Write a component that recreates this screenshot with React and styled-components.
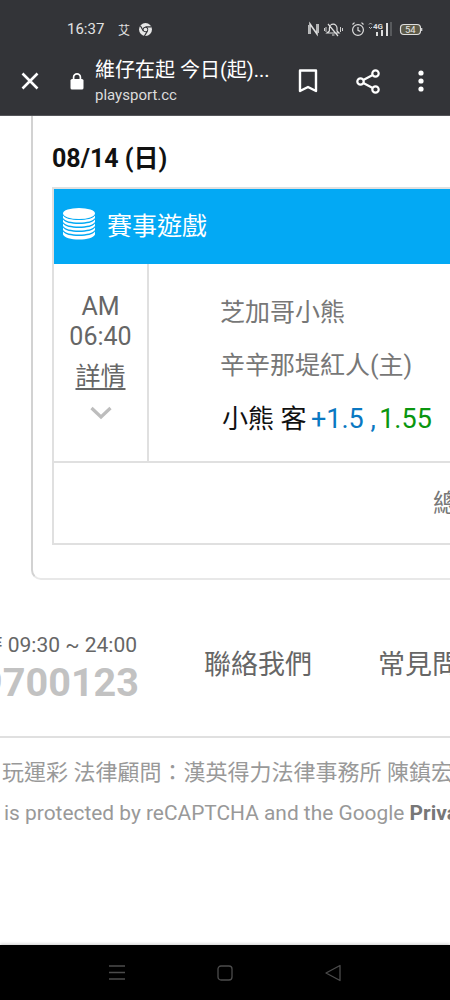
import React from "react";
import styled, { createGlobalStyle } from "styled-components";

const GlobalStyle = createGlobalStyle`
  html, body {
    margin: 0;
    padding: 0;
    background: #fff;
  }

  body {
    font-family: Roboto, "Noto Sans CJK TC", "Noto Sans", sans-serif;
  }
`;

const Phone = styled.div`
  width: 450px;
  height: 1000px;
  display: flex;
  flex-direction: column;
  overflow: hidden;
  background: #fff;
`;

const BrowserBar = styled.header`
  flex: 0 0 116px;
  box-sizing: border-box;
  background: #333438;
  border-bottom: 1px solid #55565a;
  color: #fff;
`;

const StatusBar = styled.div`
  height: 58px;
  display: flex;
  align-items: center;
  padding-left: 67px;
  color: #e2e2e2;
`;

const Clock = styled.span`
  font-size: 15px;
  width: 51px;
`;

const StatusChar = styled.span`
  font-size: 12px;
  width: 21px;
`;

const StatusRight = styled.div`
  margin-left: auto;
  width: 142px;
  display: flex;
  align-items: center;
`;

const Toolbar = styled.div`
  height: 46px;
  display: flex;
  align-items: center;
`;

const IconSlot = styled.div`
  flex: 0 0 ${({ $width }) => $width}px;
  display: flex;
  justify-content: center;
  align-items: center;
`;

const PageTitle = styled.div`
  flex: 0 0 192px;
  margin-left: 1px;
  white-space: nowrap;
  overflow: hidden;
`;

const TitleMain = styled.div`
  padding-top: 1px;
  font-size: 20px;
  line-height: 26px;
`;

const TitleUrl = styled.div`
  padding-top: 1px;
  font-size: 15px;
  line-height: 22px;
  color: #dcdcdc;
`;

const Main = styled.main`
  flex: 0 0 464px;
  padding-left: 31px;
`;

const Card = styled.section`
  box-sizing: border-box;
  width: 640px;
  height: 464px;
  padding: 28px 0 0 19px;
  border-left: 2px solid #d2d2d2;
  border-bottom: 2px solid #e8e8e8;
  border-bottom-left-radius: 10px;
`;

const DateTitle = styled.h2`
  margin: 0 0 13px;
  font-size: 25px;
  line-height: 30px;
  font-weight: 700;
  color: #111;
`;

const Table = styled.div`
  width: 620px;
  border: 2px solid #e0e0e0;
`;

const TableHeader = styled.div`
  height: 75px;
  box-sizing: border-box;
  padding: 0 0 6px 9px;
  display: flex;
  align-items: center;
  gap: 12px;
  background: #03a9f4;
  color: #fff;
  font-size: 25px;
`;

const MatchRow = styled.div`
  height: 197px;
  display: flex;
  border-bottom: 2px solid #e0e0e0;
`;

const TimeCell = styled.div`
  flex: 0 0 93px;
  border-right: 2px solid #e0e0e0;
  display: flex;
  flex-direction: column;
  align-items: center;
  padding-top: 28px;
  color: #666;
  font-size: 25px;
  line-height: 30px;
`;

const DetailLink = styled.a`
  margin-top: 10px;
  text-decoration: underline;
  text-underline-offset: 3px;
  line-height: 30px;
  color: #666;
`;

const Chevron = styled.div`
  margin-top: 14px;
  display: flex;
`;

const TeamCell = styled.div`
  padding: 27px 0 0 71px;
`;

const TeamName = styled.div`
  height: 53px;
  font-size: 25px;
  line-height: 44px;
  color: #777;
`;

const BetLine = styled.div`
  height: 44px;
  margin-left: 2px;
  font-size: 26px;
  line-height: 44px;
  color: #111;
  white-space: nowrap;
`;

const BetValue = styled.span`
  margin-left: ${({ $pull }) => $pull}px;
  font-size: 27px;
  color: ${({ $color }) => $color};
`;

const TotalRow = styled.div`
  height: 80px;
  display: flex;
  align-items: center;
  padding: 0 0 4px 379px;
  box-sizing: border-box;
  font-size: 25px;
  color: #777;
`;

const Footer = styled.footer`
  flex: 1;
  min-height: 0;
`;

const FooterTop = styled.div`
  height: 158px;
  box-sizing: border-box;
  padding-top: 53px;
  display: flex;
  border-bottom: 2px solid #e0e0e0;
`;

const Contact = styled.div`
  flex: 0 0 139px;
  min-width: 0;
  display: flex;
  flex-direction: column;
  align-items: flex-end;
  white-space: nowrap;
`;

const Hours = styled.div`
  margin-right: 2px;
  font-size: 21px;
  line-height: 24px;
  color: #666;
`;

const Hotline = styled.div`
  font-size: 39.6px;
  line-height: 52px;
  font-weight: 700;
  color: #c2c2c2;
`;

const FooterLinks = styled.nav`
  display: flex;
  gap: 66px;
  margin-left: 65px;
  padding-top: 14px;
  white-space: nowrap;
`;

const FooterLink = styled.a`
  font-size: 27px;
  line-height: 36px;
  color: #666;
`;

const Legal = styled.div`
  margin-left: ${({ $offset }) => $offset}px;
  height: 40px;
  font-size: ${({ $size }) => $size}px;
  line-height: 40px;
  color: #999;
  white-space: nowrap;
`;

const LegalStrong = styled.strong`
  color: #777;
`;

const LegalBlock = styled.div`
  padding-top: 15px;
`;

const NavBar = styled.div`
  flex: 0 0 55px;
  background: #000;
  box-shadow: 0 -1px 3px rgba(0, 0, 0, 0.2);
  display: flex;
  align-items: center;
  justify-content: center;
  gap: 92px;
`;

const ChromeIcon = () => (
  <svg width="13" height="13" viewBox="0 0 24 24">
    <circle cx="12" cy="12" r="12" fill="#e6e6e6" />
    <path d="M12 7h11M8 14.5 2.5 5M15.5 15 10 24" stroke="#333438" strokeWidth="2.2" />
    <circle cx="12" cy="12" r="5" fill="#333438" />
    <circle cx="12" cy="12" r="3.4" fill="#e6e6e6" />
  </svg>
);

const StatusIcons = () => (
  <svg width="142" height="16" viewBox="0 0 142 16" fill="none" stroke="#dedede" strokeWidth="1.2">
    {/* nfc */}
    <path d="M2 13V3l7 10V3" strokeWidth="1.5" />
    <path d="M0.5 4v9M10.5 3v9" strokeWidth="0.8" />
    {/* muted bell */}
    <path d="M19 12h12l-2-2V7a3.8 3.8 0 0 0-7.6 0v3zM24 14h2.5M20 3l10 12" />
    <path d="M16.5 7v3M18 6v5M32.5 6v5M34.5 7v3" strokeWidth="0.9" />
    {/* alarm */}
    <circle cx="50" cy="9" r="5.4" />
    <path d="M50 6v3.3l2.4 1.2M44.5 3.5 46.5 1.6M55.5 3.5l-2-1.9" />
    {/* 4G signal */}
    <path d="M61 3.5 62.5 2 64 3.5M61 6l1.5 1.5L64 6" strokeWidth="0.8" />
    <path d="M68 15h2v-4h-2zM73 15h2V9h-2zM78 15h2V2h-2z" fill="#dedede" stroke="none" />
    <text x="65" y="7.5" fontSize="8" fontWeight="700" fill="#dedede" stroke="none" fontFamily="Roboto, sans-serif">4G</text>
    <path d="M83 1v14" stroke="#66676a" strokeWidth="1.5" />
    {/* battery */}
    <rect x="92.5" y="3.5" width="20" height="10" rx="3.5" fill="#5d5a48" />
    <path d="M113.7 7v3" />
    <text x="97" y="12" fontSize="9.5" fill="#e5e5e5" stroke="none" fontFamily="Roboto, sans-serif">54</text>
  </svg>
);

const CloseIcon = () => (
  <svg width="18" height="18" viewBox="0 0 18 18" stroke="#fff" strokeWidth="2.6">
    <path d="M1.5 1.5l15 15M16.5 1.5l-15 15" />
  </svg>
);

const LockIcon = () => (
  <svg width="14" height="18" viewBox="0 0 14 18" fill="none">
    <path d="M3.6 8V5.2a3.4 3.4 0 0 1 6.8 0V8" stroke="#fff" strokeWidth="1.7" />
    <rect x="0.5" y="7" width="13" height="10.5" rx="1.6" fill="#fff" />
  </svg>
);

const BookmarkIcon = () => (
  <svg width="20" height="24" viewBox="0 0 20 24" fill="none" stroke="#fff" strokeWidth="2.4">
    <path d="M2 1.5h16v20.5l-8-4-8 4z" strokeLinejoin="round" />
  </svg>
);

const ShareIcon = () => (
  <svg width="25" height="25" viewBox="0 0 25 25" fill="none" stroke="#fff" strokeWidth="2.2">
    <circle cx="19.5" cy="4.5" r="3.2" />
    <circle cx="4.5" cy="12.5" r="3.2" />
    <circle cx="19.5" cy="20.5" r="3.2" />
    <path d="M7.3 11 16.7 6M7.3 14l9.4 5" />
  </svg>
);

const DotsIcon = () => (
  <svg width="6" height="22" viewBox="0 0 6 22" fill="#fff">
    <circle cx="3" cy="3" r="2.6" />
    <circle cx="3" cy="11" r="2.6" />
    <circle cx="3" cy="19" r="2.6" />
  </svg>
);

const CoinStack = () => (
  <svg width="32" height="32" viewBox="0 0 32 32" fill="#fff">
    <ellipse cx="16" cy="5.5" rx="16" ry="5.5" />
    <path d="M0 7.5c2 3 8 4.5 16 4.5s14-1.5 16-4.500v2.600c-2 3-8 4.500-16 4.500S2 13.100 0 10.100z" />
    <path d="M0 11.500c2 3 8 4.500 16 4.500s14-1.500 16-4.500v2.600c-2 3-8 4.500-16 4.500S2 17.100 0 14.100z" />
    <path d="M0 15.500c2 3 8 4.500 16 4.500s14-1.500 16-4.500v2.600c-2 3-8 4.500-16 4.500S2 21.100 0 18.100z" />
    <path d="M0 19.500c2 3 8 4.500 16 4.500s14-1.500 16-4.500v2.600c-2 3-8 4.500-16 4.500S2 25.100 0 22.100z" />
    <path d="M0 23.500c2 3 8 4.500 16 4.500s14-1.500 16-4.500v3c-1 3-8 5-16 5s-15-2-16-5z" />
  </svg>
);

const ChevronIcon = () => (
  <svg width="22" height="14" viewBox="0 0 22 14" fill="none" stroke="#bdbdbd" strokeWidth="3.2">
    <path d="M1.5 2 11 11l9.5-9" />
  </svg>
);

const MenuKey = () => (
  <svg width="16" height="15" viewBox="0 0 16 15" stroke="#4c4c4c" strokeWidth="1.4">
    <path d="M0 1h16M0 7.5h16M0 14h16" />
  </svg>
);

const HomeKey = () => (
  <svg width="16" height="16" viewBox="0 0 16 16" fill="none" stroke="#4c4c4c" strokeWidth="1.3">
    <rect x="1" y="1" width="14" height="14" rx="3" />
  </svg>
);

const BackKey = () => (
  <svg width="16" height="18" viewBox="0 0 16 18" fill="none" stroke="#4c4c4c" strokeWidth="1.3">
    <path d="M15 1.5v15L1 9z" strokeLinejoin="round" />
  </svg>
);

const App = () => {
  return (
    <Phone>
      <GlobalStyle />
      <BrowserBar>
        <StatusBar>
          <Clock>16:37</Clock>
          <StatusChar>艾</StatusChar>
          <ChromeIcon />
          <StatusRight>
            <StatusIcons />
          </StatusRight>
        </StatusBar>
        <Toolbar>
          <IconSlot $width={60}>
            <CloseIcon />
          </IconSlot>
          <IconSlot $width={34}>
            <LockIcon />
          </IconSlot>
          <PageTitle>
            <TitleMain>維仔在起 今日(起)...</TitleMain>
            <TitleUrl>playsport.cc</TitleUrl>
          </PageTitle>
          <IconSlot $width={42}>
            <BookmarkIcon />
          </IconSlot>
          <IconSlot $width={78}>
            <ShareIcon />
          </IconSlot>
          <IconSlot $width={28}>
            <DotsIcon />
          </IconSlot>
        </Toolbar>
      </BrowserBar>

      <Main>
        <Card>
          <DateTitle>08/14 (日)</DateTitle>
          <Table>
            <TableHeader>
              <CoinStack />
              賽事遊戲
            </TableHeader>
            <MatchRow>
              <TimeCell>
                <span>AM</span>
                <span>06:40</span>
                <DetailLink>詳情</DetailLink>
                <Chevron>
                  <ChevronIcon />
                </Chevron>
              </TimeCell>
              <TeamCell>
                <TeamName>芝加哥小熊</TeamName>
                <TeamName>辛辛那堤紅人(主)</TeamName>
                <BetLine>
                  小熊 客 <BetValue $pull={-2} $color="#0a78c2">+1.5 ,</BetValue>{" "}
                  <BetValue $pull={-3} $color="#0a960f">1.55</BetValue>
                </BetLine>
              </TeamCell>
            </MatchRow>
            <TotalRow>總</TotalRow>
          </Table>
        </Card>
      </Main>

      <Footer>
        <FooterTop>
          <Contact>
            <Hours>時 09:30 ~ 24:00</Hours>
            <Hotline>9700123</Hotline>
          </Contact>
          <FooterLinks>
            <FooterLink>聯絡我們</FooterLink>
            <FooterLink>常見問題</FooterLink>
          </FooterLinks>
        </FooterTop>
        <LegalBlock>
          <Legal $offset={2} $size={22}>玩運彩 法律顧問：漢英得力法律事務所 陳鎮宏律師</Legal>
          <Legal $offset={4} $size={20.9}>
            is protected by reCAPTCHA and the Google <LegalStrong>Privacy Policy</LegalStrong>
          </Legal>
        </LegalBlock>
      </Footer>

      <NavBar>
        <MenuKey />
        <HomeKey />
        <BackKey />
      </NavBar>
    </Phone>
  );
};

export default App;
